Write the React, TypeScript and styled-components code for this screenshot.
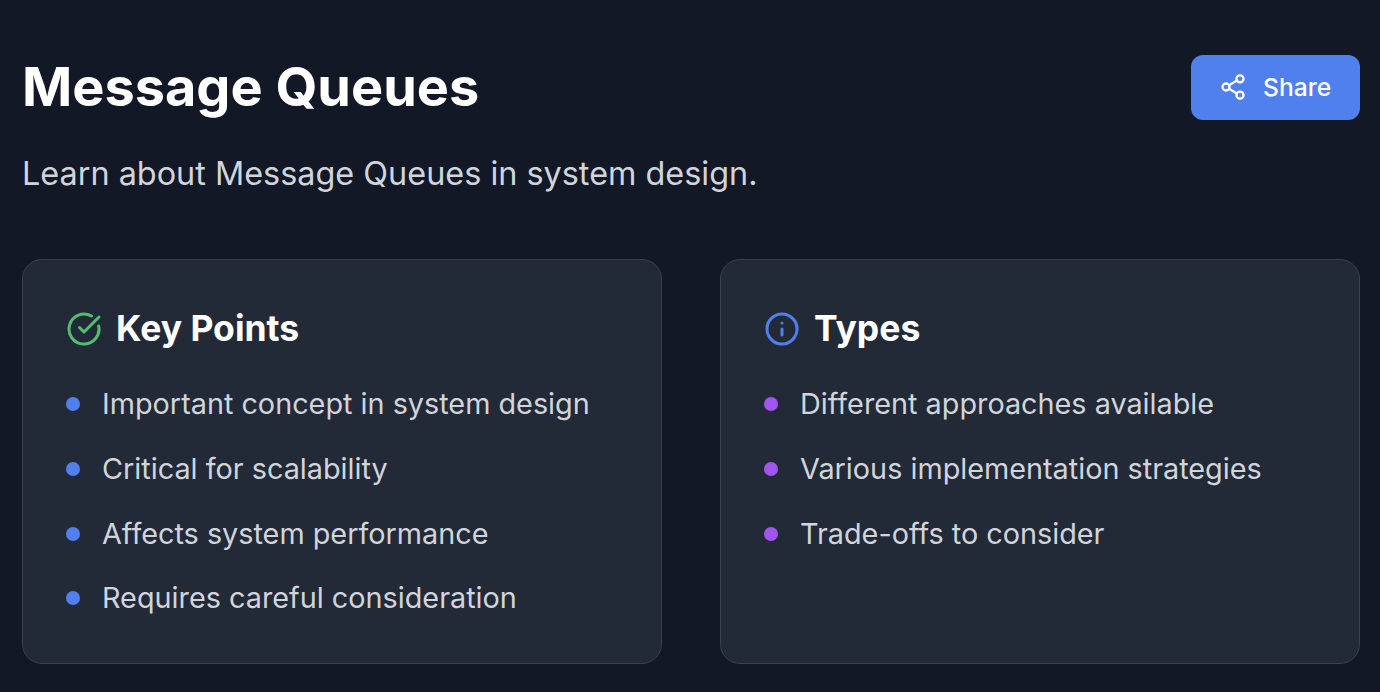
import React from "react";
import styled, { createGlobalStyle } from "styled-components";
import { CircleCheckBig, Info, Share2 } from "lucide-react";

const Global = createGlobalStyle`
  html, body { margin: 0; padding: 0; background: #121826; }
  body { font-family: Inter, "Noto Sans", sans-serif; }
  * { box-sizing: border-box; }
`;
const Page = styled.div`
  width: 1380px; height: 692px; overflow: hidden; background: #121826;
  padding: 55px 20px 0 22px;
`;
const Header = styled.header`
  display: flex; justify-content: space-between; align-items: flex-start;
`;
const Title = styled.h1`
  margin: 0; font-size: 54px; line-height: 63px; font-weight: 700; color: #fff;
`;
const Sub = styled.p`
  margin: 36px 0 0; font-size: 32.4px; line-height: 40px; color: #d1d5db;
`;
const ShareButton = styled.button`
  display: flex; align-items: center; gap: 16px; width: 169px; height: 65px;
  padding: 0 28px 2px; border: 0; border-radius: 12px; background: #4f80ee; color: #fff;
  font: 500 24.6px Inter, sans-serif;
`;
const Grid = styled.div`
  display: grid; grid-template-columns: 640px 640px; gap: 58px; margin-top: 65px;
`;
const Card = styled.section`
  height: 405px; padding: 45px 43px 0; border-radius: 20px; background: #222a38;
  border: 1px solid #3a414e;
`;
const CardTitle = styled.h2`
  display: flex; align-items: center; gap: 14px; margin: 0 0 31px;
  font-size: 35.5px; line-height: 48px; font-weight: 700; color: #fff;
`;
const List = styled.ul`
  list-style: none; margin: 0; padding: 0; display: flex; flex-direction: column; gap: 24.8px;
`;
const Item = styled.li<{ $dot: string }>`
  display: flex; align-items: center; gap: 22px; font-size: 28.8px; line-height: 40px; color: #d1d5db;
  &::before { content: ""; width: 14px; height: 14px; border-radius: 50%; background: ${p => p.$dot}; }
`;

const keyPoints = ["Important concept in system design", "Critical for scalability", "Affects system performance", "Requires careful consideration"];
const types = ["Different approaches available", "Various implementation strategies", "Trade-offs to consider"];

export default function App() {
  return (
    <Page>
      <Global />
      <Header>
        <div>
          <Title>Message Queues</Title>
          <Sub>Learn about Message Queues in system design.</Sub>
        </div>
        <ShareButton><Share2 size={28} strokeWidth={2} />Share</ShareButton>
      </Header>
      <Grid>
        <Card>
          <CardTitle><CircleCheckBig size={36} strokeWidth={2} color="#55bd6f" />Key Points</CardTitle>
          <List>{keyPoints.map(t => <Item key={t} $dot="#4f80ee">{t}</Item>)}</List>
        </Card>
        <Card>
          <CardTitle><Info size={36} strokeWidth={2} color="#4f80ee" />Types</CardTitle>
          <List>{types.map(t => <Item key={t} $dot="#a055f0">{t}</Item>)}</List>
        </Card>
      </Grid>
    </Page>
  );
}
